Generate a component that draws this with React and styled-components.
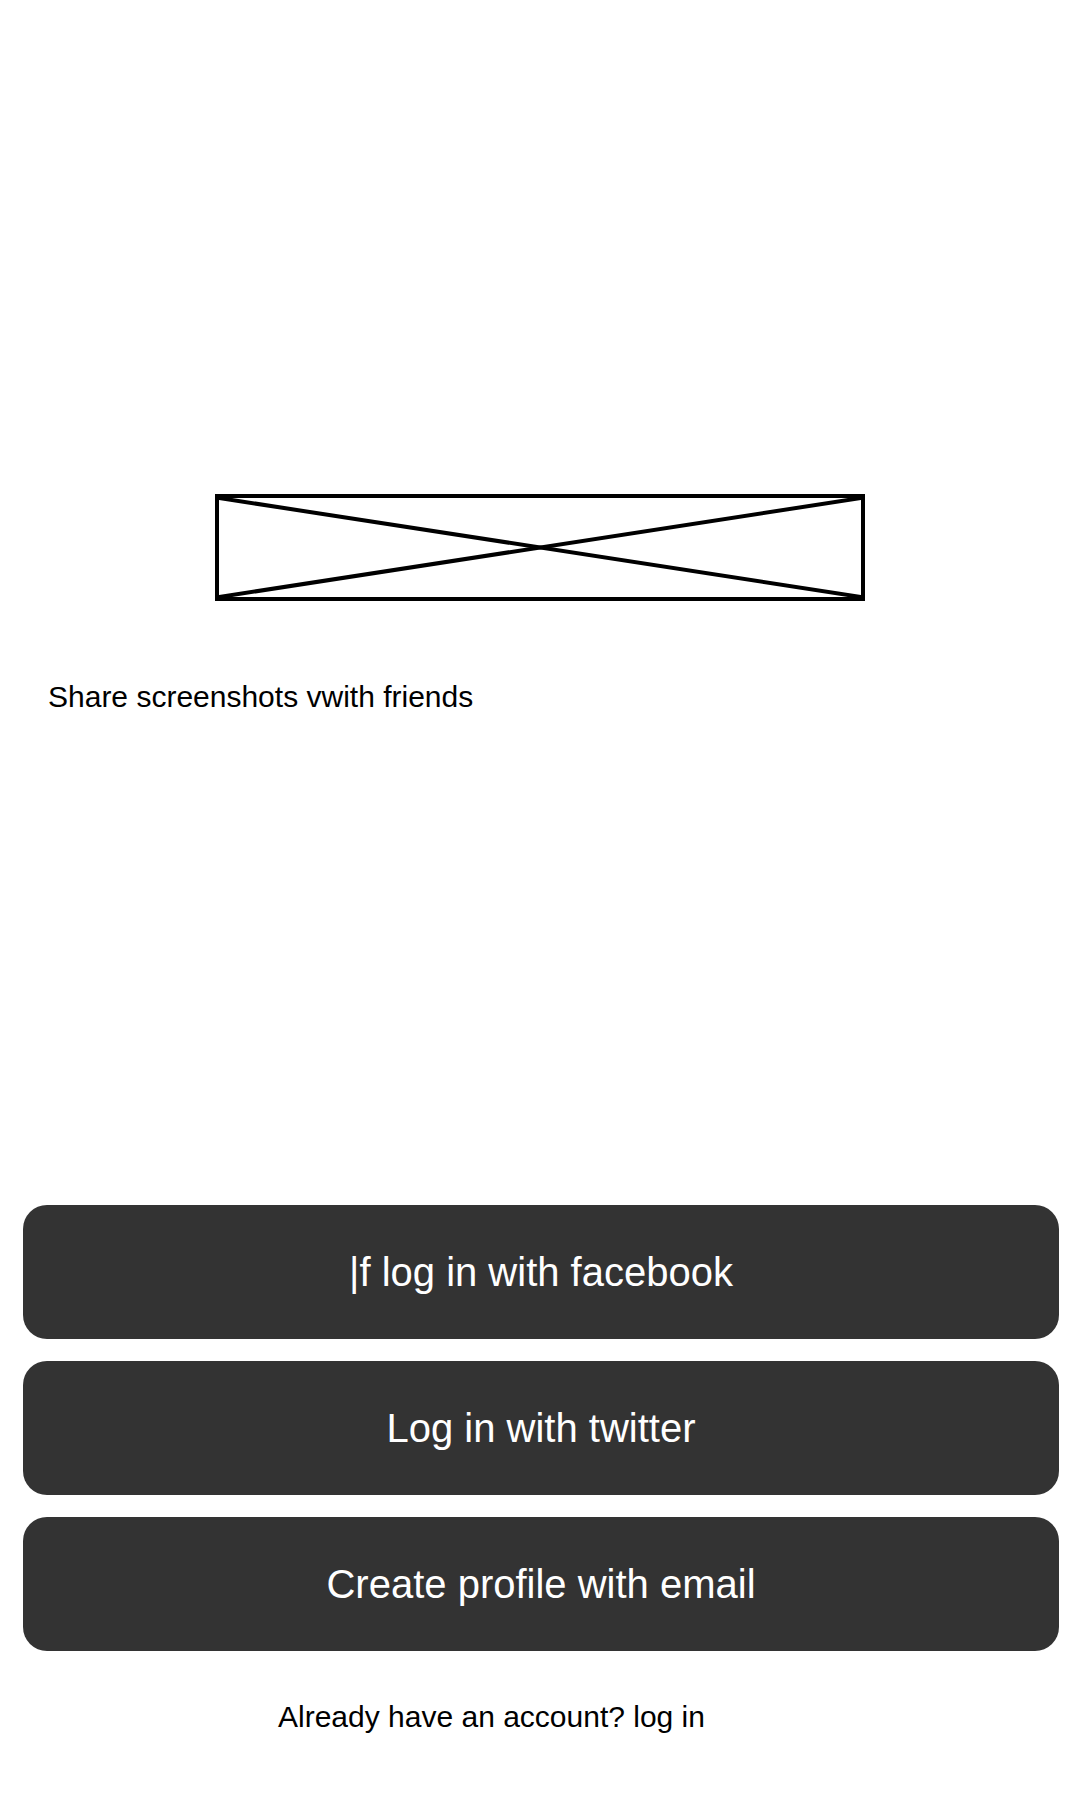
import React from "react";
import styled, { createGlobalStyle } from "styled-components";

const GlobalStyle = createGlobalStyle`
  html, body {
    margin: 0;
    padding: 0;
    background: #ffffff;
  }

  body {
    font-family: "Liberation Sans", Arial, sans-serif;
    color: #000000;
  }
`;

const Page = styled.main`
  width: 1080px;
  min-height: 1800px;
  display: flex;
  flex-direction: column;
  box-sizing: border-box;
  padding-top: 494px;
`;

const Placeholder = styled.div`
  width: 650px;
  height: 107px;
  margin: 0 auto;
  border: 4.5px solid #000000;
  box-sizing: border-box;

  svg {
    display: block;
    width: 100%;
    height: 100%;
  }
`;

const Tagline = styled.p`
  margin: 79px 0 0;
  padding-left: 48px;
  font-size: 30px;
  line-height: 34px;
`;

const Actions = styled.div`
  display: flex;
  flex-direction: column;
  gap: 22px;
  margin-top: 491px;
  padding: 0 21px 0 23px;
`;

const Button = styled.button`
  height: 134px;
  width: 100%;
  border: none;
  border-radius: 24px;
  background: #333333;
  color: #ffffff;
  font-family: "Liberation Sans", Arial, sans-serif;
  font-size: 40px;
  cursor: pointer;
`;

const Footer = styled.p`
  margin: 49px 0 0;
  padding-left: 278px;
  font-size: 30px;
  line-height: 34px;
`;

function ImagePlaceholder() {
  return (
    <Placeholder>
      <svg viewBox="0 0 100 100" preserveAspectRatio="none">
        <line
          x1="0"
          y1="0"
          x2="100"
          y2="100"
          stroke="#000"
          strokeWidth="4"
          vectorEffect="non-scaling-stroke"
        />
        <line
          x1="0"
          y1="100"
          x2="100"
          y2="0"
          stroke="#000"
          strokeWidth="4"
          vectorEffect="non-scaling-stroke"
        />
      </svg>
    </Placeholder>
  );
}

export default function App() {
  return (
    <>
      <GlobalStyle />
      <Page>
        <ImagePlaceholder />
        <Tagline>Share screenshots vwith friends</Tagline>

        <Actions>
          <Button>|f log in with facebook</Button>
          <Button>Log in with twitter</Button>
          <Button>Create profile with email</Button>
        </Actions>

        <Footer>Already have an account? log in</Footer>
      </Page>
    </>
  );
}
